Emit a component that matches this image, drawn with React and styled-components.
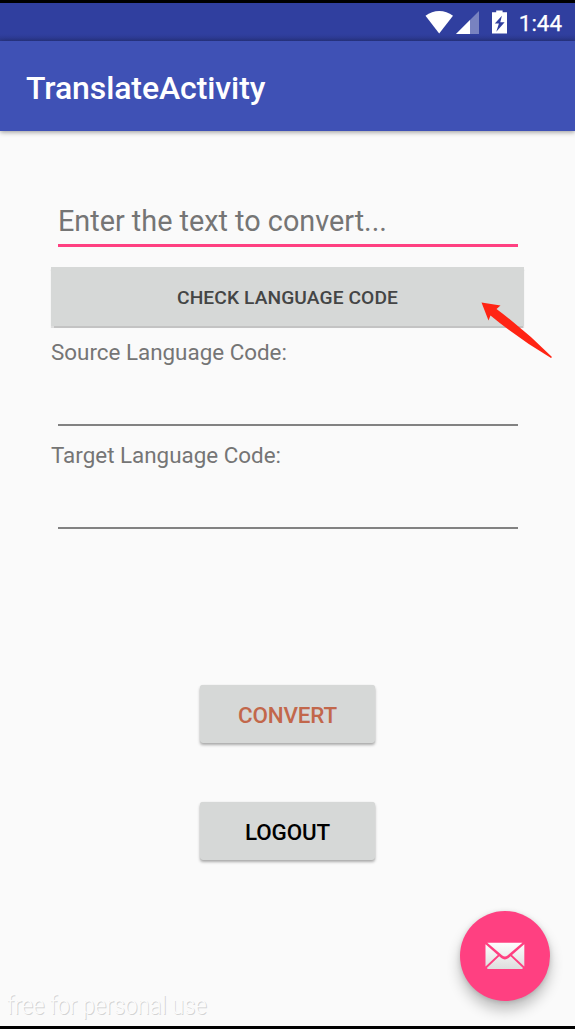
import React from 'react';
import styled, { createGlobalStyle } from 'styled-components';

const GlobalStyle = createGlobalStyle`
  * { box-sizing: border-box; }
  body { margin: 0; background: #fafafa; font-family: Roboto, sans-serif; overflow: hidden; }
  button { font-family: inherit; border: 0; padding: 0; }
`;

const Screen = styled.div`
  position: relative;
  display: flex;
  flex-direction: column;
  width: 575px;
  height: 1029px;
  background: #fafafa;
  border-top: 3px solid #000;
  border-bottom: 3px solid #000;
  overflow: hidden;
`;

const StatusBar = styled.header`
  display: flex;
  flex: 0 0 38px;
  align-items: center;
  justify-content: flex-end;
  padding: 0 13px 0 0;
  background: linear-gradient(#303f9f 0, #303f9f 31px, #2b388c 38px);
  color: #fff;
`;

const StatusIcons = styled.svg`
  width: 84px;
  height: 38px;
  margin-right: 10px;
`;

const Clock = styled.span`
  font-size: 22.4px;
  line-height: 36px;
  padding-top: 2px;
  font-weight: 400;
  -webkit-text-stroke: 0.25px #fff;
`;

const AppBar = styled.div`
  display: flex;
  flex: 0 0 90px;
  align-items: center;
  padding: 4px 26px 0;
  background: #3f51b5;
  box-shadow: 0 1px 5px rgba(0, 0, 0, 0.42);
`;

const Title = styled.h1`
  margin: 0;
  color: #fff;
  font-size: 32px;
  font-weight: 500;
  line-height: 40px;
  letter-spacing: -0.1px;
`;

const Form = styled.main`
  display: flex;
  flex-direction: column;
  align-items: stretch;
  padding: 70px 51px 0;
`;

const TextField = styled.div`
  height: ${(p) => p.$height}px;
  margin: 0 6.5px 0 7px;
  border-bottom: ${(p) => (p.$active ? '3px solid #ff4081' : '2px solid #828282')};
  color: #757575;
  font-size: 28.8px;
  line-height: 40px;
  white-space: nowrap;
`;

const Label = styled.label`
  height: 30px;
  margin-top: ${(p) => p.$top}px;
  color: #757575;
  font-size: 22.4px;
  line-height: 32px;
`;

const Button = styled.button`
  display: block;
  background: #d6d8d7;
  font-weight: 500;
  white-space: nowrap;
`;

const WideButton = styled(Button)`
  height: 59px;
  margin-top: 20px;
  padding-top: 2px;
  color: #444545;
  font-size: 19.2px;
  letter-spacing: 0.1px;
  box-shadow: 0 1.5px 1px rgba(0, 0, 0, 0.22);
`;

const Actions = styled.div`
  display: flex;
  flex-direction: column;
  align-items: center;
  gap: 59px;
  margin-top: 156px;
`;

const ActionButton = styled(Button)`
  width: 175px;
  height: 58px;
  padding-top: 2px;
  border-radius: 3px;
  color: ${(p) => p.$color};
  font-size: 22.4px;
  letter-spacing: -0.15px;
  box-shadow: 0 2px 3px rgba(0, 0, 0, 0.32), 0 0 1px rgba(0, 0, 0, 0.12);
`;

const Fab = styled.button`
  position: absolute;
  right: 25px;
  bottom: 25px;
  display: flex;
  align-items: center;
  justify-content: center;
  width: 90px;
  height: 90px;
  border-radius: 50%;
  background: #ff4081;
  box-shadow: 0 9px 14px rgba(0, 0, 0, 0.24), 0 1px 5px rgba(0, 0, 0, 0.14);
`;

const Watermark = styled.div`
  position: absolute;
  left: 7px;
  bottom: 5px;
  color: #fcfcfc;
  font-size: 25.6px;
  font-weight: 300;
  line-height: 32px;
  white-space: nowrap;
  transform: scaleX(0.866);
  transform-origin: 0 50%;
  text-shadow: 1px 1px 0 #d4d4d4;
`;

const Pointer = styled.svg`
  position: absolute;
  left: 480px;
  top: 294px;
  width: 74px;
  height: 64px;
`;

export default function App() {
  return (
    <>
      <GlobalStyle />
      <Screen>
        <StatusBar>
          <StatusIcons viewBox="0 0 84 38">
            <path d="M.5 12.8C8.5 6.4 20 6.4 28 12.8L14.2 30.6Z" fill="#fff" />
            <path d="M54 8V31H31Z" fill="#fff" opacity=".35" />
            <path d="M45 17V31H31Z" fill="#fff" />
            <path
              d="M68 9.2h3.2V7.5h6.4v1.7H82V30.5H67V9.2ZM76.9 12.8 69.8 20.6h4.1l-2.6 8.2 8.3-9.5h-4.3Z"
              fill="#fff"
              fillRule="evenodd"
            />
          </StatusIcons>
          <Clock>1:44</Clock>
        </StatusBar>
        <AppBar>
          <Title>TranslateActivity</Title>
        </AppBar>
        <Form>
          <TextField $height={46} $active>Enter the text to convert...</TextField>
          <WideButton>CHECK LANGUAGE CODE</WideButton>
          <Label $top={10}>Source Language Code:</Label>
          <TextField $height={60} />
          <Label $top={13}>Target Language Code:</Label>
          <TextField $height={60} />
          <Actions>
            <ActionButton $color="#c2674b">CONVERT</ActionButton>
            <ActionButton $color="#000">LOGOUT</ActionButton>
          </Actions>
        </Form>
        <Pointer viewBox="0 0 74 64">
          <path d="M1.5 5.5 20.5 8.5 16.5 12 Q46 34 72 60 L71 61 Q40 43 10.5 18.5 L8.5 23.5Z" fill="#ff2414" />
        </Pointer>
        <Watermark>free for personal use</Watermark>
        <Fab aria-label="Compose">
          <svg width="40" height="28" viewBox="0 0 40 28">
            <defs>
              <linearGradient id="paper" x1="0" y1="0" x2="0" y2="28" gradientUnits="userSpaceOnUse">
                <stop offset="0" stopColor="#fff" />
                <stop offset="1" stopColor="#dcdcdc" />
              </linearGradient>
            </defs>
            <g fill="url(#paper)">
              <path d="M2.3.8H37.4L22.5 13.5Q19.9 15.5 17.3 13.5Z" />
              <path d="M.5 2.2 12.8 13 .5 24.5Z" />
              <path d="M39.3 2.2V24.5L27 13Z" />
              <path d="M14.2 14.2 16.2 16Q19.9 18.8 23.6 16L25.6 14.2 38 26Q37.6 27 36.5 27H3.3Q2.2 27 1.9 26Z" />
            </g>
          </svg>
        </Fab>
      </Screen>
    </>
  );
}
